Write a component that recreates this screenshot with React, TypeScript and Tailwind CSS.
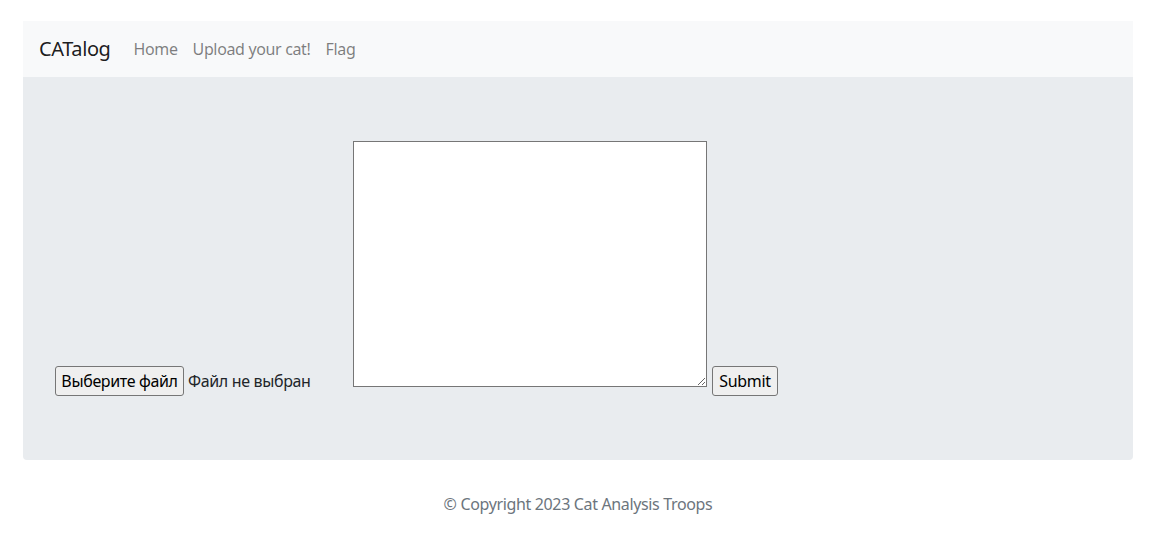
import React from "react";

export default function App() {
  const font = { fontFamily: '"Noto Sans", "Open Sans", sans-serif' };
  return (
    <div className="w-full bg-white pt-[21px] tracking-[-0.35px]" style={font}>
      <div className="ml-[23px] w-[1110px]">
        <nav className="flex h-[56px] items-center bg-[#f8f9fa] px-[16px]">
          <span className="mr-[15px] text-[20px] leading-[30px] tracking-[-0.4px] text-[rgba(0,0,0,0.9)]">CATalog</span>
          <a className="w-[59px] whitespace-nowrap px-[8px] text-[16px] leading-[24px] text-[rgba(0,0,0,0.5)]">Home</a>
          <a className="w-[133px] whitespace-nowrap px-[8px] text-[16px] leading-[24px] text-[rgba(0,0,0,0.5)]">Upload your cat!</a>
          <a className="whitespace-nowrap px-[8px] text-[16px] leading-[24px] text-[rgba(0,0,0,0.5)]">Flag</a>
        </nav>
        <div className="rounded-b-[4px] bg-[#e9ecef] px-[32px] pb-[64px] pt-[64px]">
          <div className="flex items-end">
            <div className="flex w-[298px] items-center">
              <button className="h-[30px] w-[129px] rounded-[3px] border border-[#767676] bg-[#efefef] p-0 text-[16px] leading-[24px] text-black">
                Выберите файл
              </button>
              <span className="ml-[4px] text-[16px] text-[#212529]">Файл не выбран</span>
            </div>
            <textarea className="mb-[9px] h-[246px] w-[354px] resize border border-[#767676] bg-white outline-none" />
            <button className="ml-[5px] h-[30px] w-[66px] rounded-[3px] border border-[#767676] bg-[#efefef] p-0 text-[16px] leading-[24px] text-black">
              Submit
            </button>
          </div>
        </div>
        <footer className="pb-[28px] pt-[32px] text-center text-[16px] leading-[24px] text-[#6c757d]">
          © Copyright 2023 Cat Analysis Troops
        </footer>
      </div>
    </div>
  );
}
